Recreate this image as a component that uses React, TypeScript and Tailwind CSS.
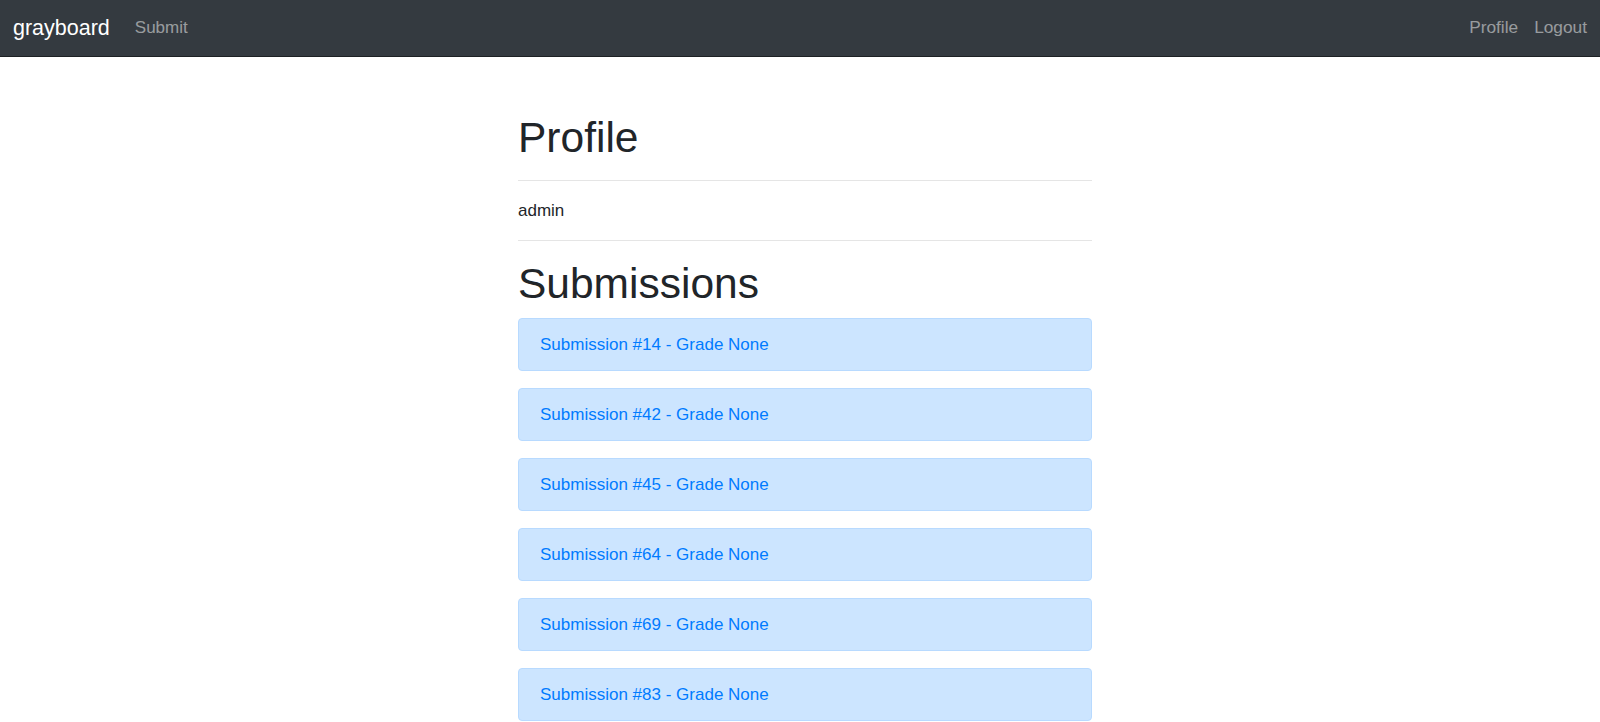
const submissions = [14, 42, 45, 64, 69, 83];

export default function App() {
  return (
    <div className="min-h-screen bg-white text-[#212529] font-['Liberation_Sans',Arial,sans-serif]">
      <nav className="flex h-[57px] items-center justify-between border-b border-[#1d2124] bg-[#343a40] px-[13px]">
        <div className="flex items-center">
          <a className="mr-[25px] text-[21.5px] text-white">grayboard</a>
          <a className="text-[17px] text-white/50">Submit</a>
        </div>
        <div className="flex items-center gap-[16px]">
          <a className="text-[17.3px] text-white/50">Profile</a>
          <a className="text-[17.3px] text-white/50">Logout</a>
        </div>
      </nav>
      <div className="flex justify-center pl-[10px]">
        <main className="w-[574px] pt-[55px]">
          <h1 className="mb-[17px] text-[42.5px] leading-[1.2]">Profile</h1>
          <hr className="border-[#e5e5e5]" />
          <p className="py-[20.5px] text-[17px] leading-[18px]">admin</p>
          <hr className="border-[#e5e5e5]" />
          <h2 className="mt-[17px] mb-[9px] text-[42.5px] leading-[1.2]">Submissions</h2>
          <div className="flex flex-col gap-[17px]">
            {submissions.map((n) => (
              <div
                key={n}
                className="flex h-[53px] items-center rounded-[4px] border border-[#b8daff] bg-[#cce5ff] px-[21px]"
              >
                <a className="text-[17px] text-[#007bff]">Submission #{n} - Grade None</a>
              </div>
            ))}
          </div>
        </main>
      </div>
    </div>
  );
}
